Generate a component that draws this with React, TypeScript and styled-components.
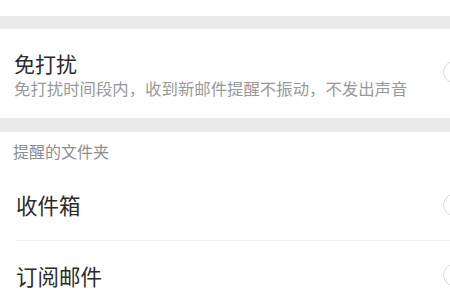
import React from "react";
import styled, { createGlobalStyle } from "styled-components";

const Global = createGlobalStyle`
  html, body {
    margin: 0;
    padding: 0;
    background: #ffffff;
    overflow: hidden;
  }
  body {
    font-family: "Noto Sans CJK SC", "Noto Sans", sans-serif;
  }
`;

const Page = styled.div`
  width: 450px;
  height: 300px;
  overflow: hidden;
  display: flex;
  flex-direction: column;
  background: #ffffff;
  & > * {
    flex-shrink: 0;
  }
`;

const TopSpace = styled.div`
  height: 16px;
  background: #ffffff;
`;

const Gap = styled.div<{ $h: number }>`
  height: ${(p) => p.$h}px;
  background: #eaeaea;
`;

const Section = styled.section`
  background: #ffffff;
  display: flex;
  flex-direction: column;
  & > * {
    flex-shrink: 0;
  }
`;

const Row = styled.div<{ $h: number; $pl: number }>`
  height: ${(p) => p.$h}px;
  padding-left: ${(p) => p.$pl}px;
  display: flex;
  align-items: center;
  justify-content: space-between;
`;

const TextCol = styled.div`
  display: flex;
  flex-direction: column;
`;

const Title = styled.div`
  font-size: 21px;
  line-height: 26px;
  color: #2b2b2b;
`;

const Sub = styled.div`
  font-size: 16.4px;
  line-height: 20px;
  color: #999999;
  margin-top: 2px;
  white-space: nowrap;
`;

const Label = styled.div<{ $dy?: number }>`
  font-size: 21.5px;
  color: #2b2b2b;
  margin-top: ${(p) => p.$dy ?? 0}px;
`;

const Header = styled.div`
  height: 40px;
  padding-left: 13px;
  display: flex;
  align-items: center;
  font-size: 16px;
  color: #8e8e8e;
  padding-bottom: 2px;
  box-sizing: border-box;
`;

const Divider = styled.div`
  height: 1px;
  margin-left: 16px;
  background: #eeeeee;
`;

const Switch = styled.div<{ $dy?: number }>`
  width: 50px;
  height: 20px;
  border: 1.5px solid #dadada;
  border-radius: 12px;
  margin-right: -45px;
  margin-top: ${(p) => p.$dy ?? 0}px;
  flex-shrink: 0;
  background: #ffffff;
`;

export default function App() {
  return (
    <Page>
      <Global />
      <TopSpace />
      <Gap $h={13} />
      <Section>
        <Row $h={89} $pl={14}>
          <TextCol>
            <Title>免打扰</Title>
            <Sub>免打扰时间段内，收到新邮件提醒不振动，不发出声音</Sub>
          </TextCol>
          <Switch $dy={-4} />
        </Row>
      </Section>
      <Gap $h={14} />
      <Section>
        <Header>提醒的文件夹</Header>
        <Row $h={68} $pl={16}>
          <Label $dy={-4}>收件箱</Label>
          <Switch $dy={-2} />
        </Row>
        <Divider />
        <Row $h={68} $pl={16}>
          <Label>订阅邮件</Label>
          <Switch />
        </Row>
      </Section>
    </Page>
  );
}
